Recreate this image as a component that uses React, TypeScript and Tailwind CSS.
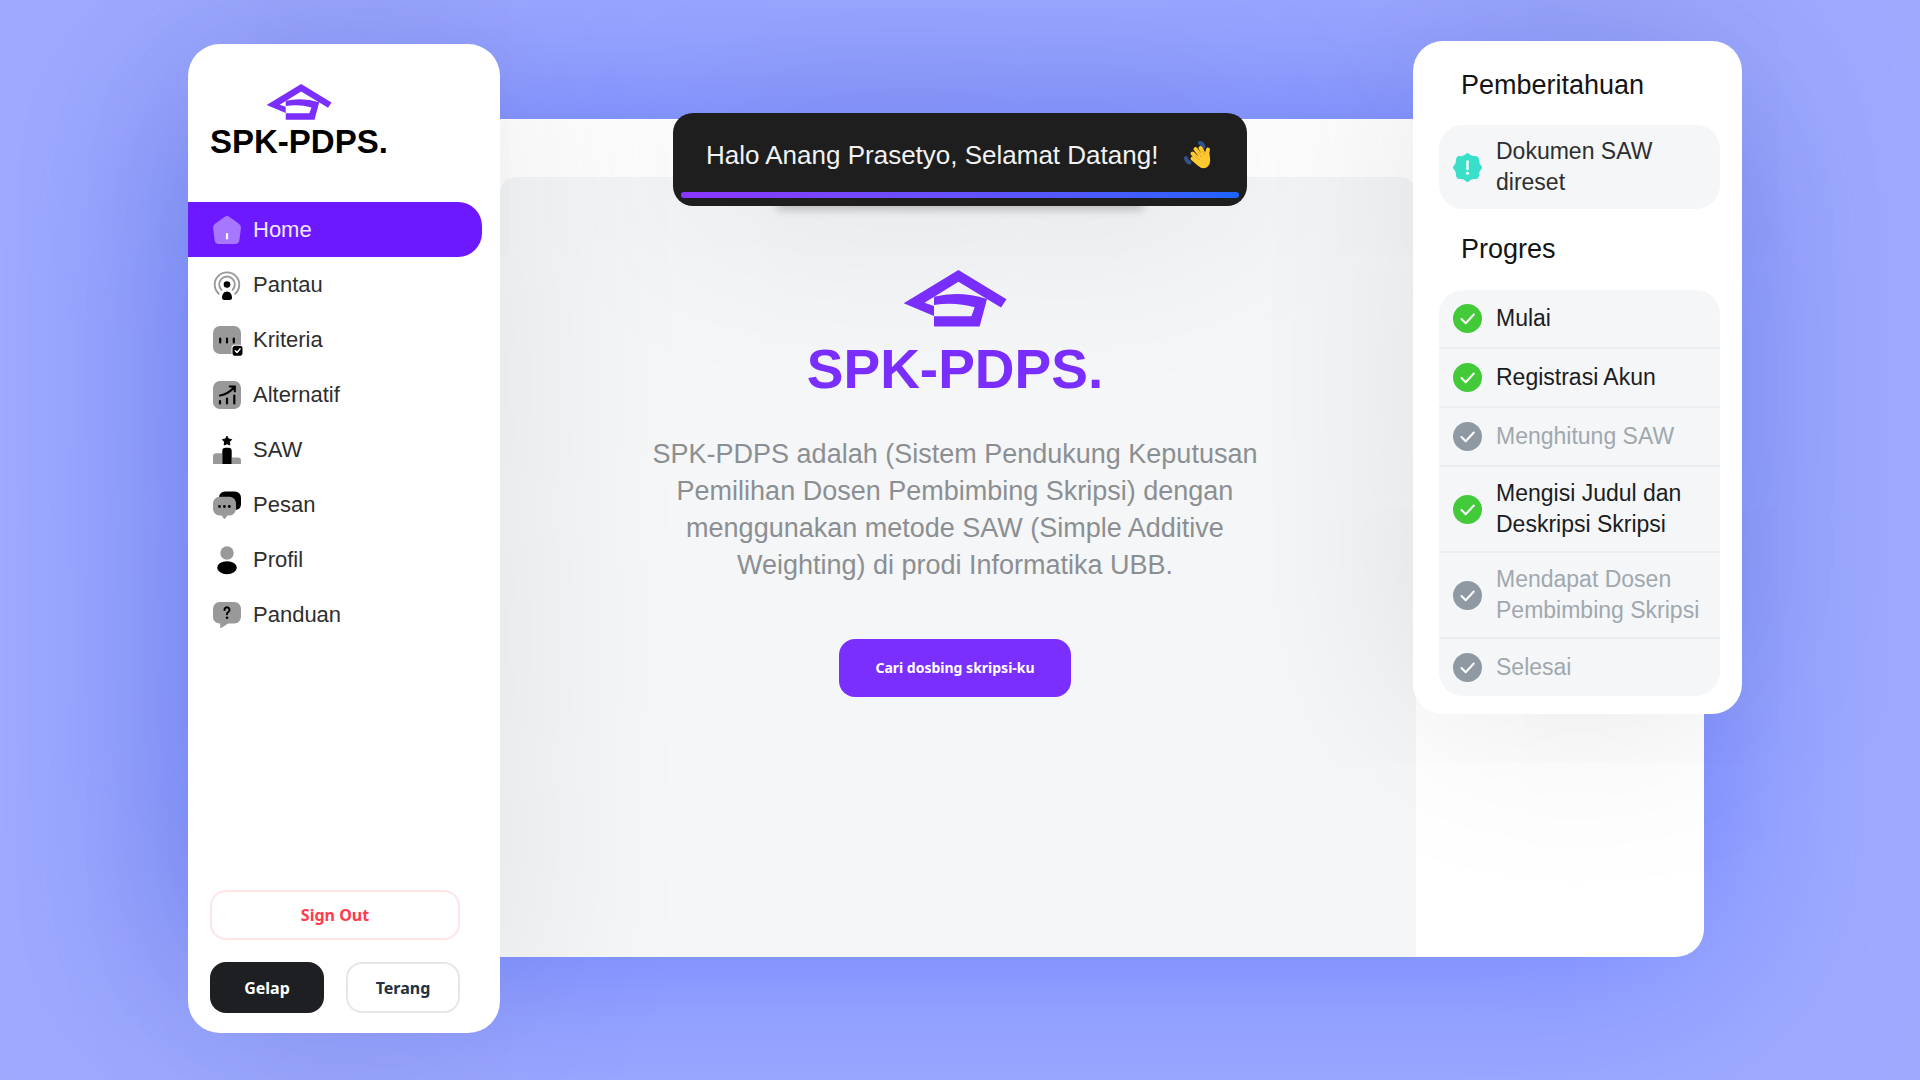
import type { ReactNode } from 'react';

function Logo({ className }: { className: string }) {
  return (
    <svg viewBox="0 0 104 57" className={className} fill="#7b2fff" aria-hidden="true">
      <path d="M55.4 0 103.5 29.2 98 37.5 55.4 11.7 21.5 32.7 31 36V46L.7 33.3Z" />
      <path d="M31 26.7Q57 20.5 84 29L76.6 56.5H31V46.3H68.4L71.7 37.3Q52 31.5 31 35Z" />
    </svg>
  );
}

function Icon({ children }: { children: ReactNode }) {
  return (
    <svg viewBox="0 0 28 28" className="size-7 shrink-0 overflow-visible" aria-hidden="true">
      {children}
    </svg>
  );
}

const HomeIcon = () => (
  <Icon>
    <path
      d="M11.4 1a4.4 4.4 0 0 1 5.2 0l9.6 7.1A4.4 4.4 0 0 1 27.9 12.2L26.4 24A4.4 4.4 0 0 1 22 28H6A4.4 4.4 0 0 1 1.6 24L.1 12.2A4.4 4.4 0 0 1 1.8 8.1Z"
      fill="#a877ff"
    />
    <path d="M14 18V22.500" stroke="#fff" strokeWidth="2.200" strokeLinecap="round" />
  </Icon>
);

const MonitorIcon = () => (
  <Icon>
    <g fill="none" stroke="#999" strokeWidth="1.900" strokeLinecap="round">
      <path d="M5.800 22.800A12.300 12.300 0 1 1 22.200 22.800" />
      <path d="M8.400 18.800A7.800 7.800 0 1 1 19.600 18.800" />
    </g>
    <circle cx="14" cy="13.500" r="3.300" />
    <path d="M14 20.500C17.200 20.500 18.900 23.500 19 26.500Q19 29 16.500 29H11.500Q9 29 9 26.500C9.100 23.500 10.800 20.500 14 20.500Z" />
  </Icon>
);

const CriteriaIcon = () => (
  <Icon>
    <rect width="28" height="28" rx="7" fill="#999" />
    <path d="M7.200 12.500V16.500M14 12.500V16.500M20.800 12.500V16.500" stroke="#000" strokeWidth="2.200" strokeLinecap="round" />
    <rect x="18.500" y="18.700" width="11.500" height="11.500" rx="3.500" fill="#fff" />
    <rect x="19.500" y="19.700" width="10" height="10" rx="2.800" />
    <path d="M22.300 24.800 24 26.400 27 22.900" fill="none" stroke="#fff" strokeWidth="1.500" strokeLinecap="round" strokeLinejoin="round" />
  </Icon>
);

const AlternativeIcon = () => (
  <Icon>
    <rect width="28" height="28" rx="7" fill="#999" />
    <g fill="none" stroke="#000" strokeWidth="2.200" strokeLinecap="round">
      <path d="M7 20V22.500M14 17.500V22.500M21.300 14.500V22.500" />
      <path d="M7 14.500Q15 13 20.800 6.700M16.800 5.500H21.800V10.300" />
    </g>
  </Icon>
);

const RankIcon = () => (
  <Icon>
    <path d="M0 28V20.500A3.200 3.200 0 0 1 3.200 17.300H9V28ZM19 21.500H25A3 3 0 0 1 28 24.500V28H19Z" fill="#999" />
    <path d="M9.300 28V15A3.200 3.200 0 0 1 12.500 11.800H15.500A3.200 3.200 0 0 1 18.700 15V28Z" />
    <path
      d="M14 .2 15.500 3 18.600 3.600 16.400 5.900 16.800 9 14 7.700 11.200 9 11.600 5.900 9.400 3.600 12.500 3Z"
      stroke="#000"
      strokeWidth="1"
      strokeLinejoin="round"
    />
  </Icon>
);

const MessageIcon = () => (
  <Icon>
    <path d="M12 .5H22A6 6 0 0 1 28 6.500V13.500A6 6 0 0 1 22.800 19L21 8 6 6A6 6 0 0 1 12 .5Z" />
    <path
      d="M6.500 5.800H16.500A6.500 6.500 0 0 1 23 12.300V18A6.500 6.500 0 0 1 16.500 24.500H14.300L12.500 27.200Q11.500 28.500 10.500 27.200L8.700 24.500H6.500A6.500 6.500 0 0 1 0 18V12.300A6.500 6.500 0 0 1 6.500 5.800Z"
      fill="#999"
    />
    <circle cx="6.500" cy="15.500" r="1.400" />
    <circle cx="11.400" cy="15.500" r="1.400" />
    <circle cx="16.300" cy="15.500" r="1.400" />
  </Icon>
);

const ProfileIcon = () => (
  <Icon>
    <circle cx="14" cy="7" r="6.700" fill="#999" />
    <ellipse cx="14" cy="21.700" rx="9.800" ry="6.500" />
  </Icon>
);

const GuideIcon = () => (
  <Icon>
    <path
      d="M6.500 1H21.500A6.500 6.500 0 0 1 28 7.500V16A6.500 6.500 0 0 1 21.500 22.500H15L8.700 26.800Q7 27.700 7.200 25.700V22.500A6.500 6.500 0 0 1 0 16V7.500A6.500 6.500 0 0 1 6.500 1Z"
      fill="#999"
    />
    <path d="M11.500 8.900A2.500 2.500 0 1 1 15.300 11Q14 11.800 14 13.200" fill="none" stroke="#000" strokeWidth="2" strokeLinecap="round" />
    <circle cx="14" cy="16.800" r="1.300" />
  </Icon>
);

const navItems = [
  { label: 'Home', icon: HomeIcon, active: true },
  { label: 'Pantau', icon: MonitorIcon },
  { label: 'Kriteria', icon: CriteriaIcon },
  { label: 'Alternatif', icon: AlternativeIcon },
  { label: 'SAW', icon: RankIcon },
  { label: 'Pesan', icon: MessageIcon },
  { label: 'Profil', icon: ProfileIcon },
  { label: 'Panduan', icon: GuideIcon },
];

const steps = [
  { label: 'Mulai', done: true },
  { label: 'Registrasi Akun', done: true },
  { label: 'Menghitung SAW', done: false },
  { label: 'Mengisi Judul dan Deskripsi Skripsi', done: true },
  { label: 'Mendapat Dosen Pembimbing Skripsi', done: false },
  { label: 'Selesai', done: false },
];

function Sidebar() {
  return (
    <aside className="z-10 col-start-1 row-start-1 mt-11 mb-[47px] flex flex-col rounded-[32px] bg-white shadow-[0_0_200px_rgba(0,0,0,0.11)]">
      <a href="#" className="ml-[22px] mt-10 flex flex-col items-center self-start text-black">
        <Logo className="h-9 w-[66px]" />
        <span className="mt-1 text-[33px] leading-9 font-bold">SPK-PDPS.</span>
      </a>
      <nav className="mt-[42px] mr-[18px] flex flex-col">
        {navItems.map(({ label, icon: NavIcon, active }) => (
          <a
            key={label}
            href="#"
            className={
              active
                ? 'flex h-[55px] items-center gap-3 rounded-r-3xl bg-[#6c19ff] pl-[25px] text-[22px] text-[#f0e8ff]'
                : 'flex h-[55px] items-center gap-3 pl-[25px] text-[22px] text-[#2e2e2e]'
            }
          >
            <NavIcon />
            {label}
          </a>
        ))}
      </nav>
      <div className="mt-auto mr-10 mb-5 ml-[22px] grid grid-cols-2 gap-[22px] font-['Noto_Sans',sans-serif] text-base font-bold">
        <button type="button" className="col-span-2 h-[50px] rounded-2xl border-2 border-[#ffe4e6] text-[#ff3b4c]">
          Sign Out
        </button>
        <button type="button" className="h-[51px] rounded-2xl bg-[#1e1f23] text-white">
          Gelap
        </button>
        <button type="button" className="h-[51px] rounded-2xl border-2 border-[#e6e6e8] text-[#22303f]">
          Terang
        </button>
      </div>
    </aside>
  );
}

function Hero() {
  return (
    <div className="col-span-3 col-start-1 row-start-1 mt-[119px] mb-[123px] flex rounded-[28px] bg-white pt-[58px] pl-[312px] shadow-[0_0_190px_#6b80ff]">
      <main className="flex flex-1 flex-col items-center rounded-t-2xl bg-[#f4f6f8] pt-[93px] pr-[6px]">
        <Logo className="h-[57px] w-[104px]" />
        <h1 className="mt-3 text-[55px] leading-[60px] font-bold text-[#7b2fff]">SPK-PDPS.</h1>
        <p className="mt-[37px] max-w-[620px] text-center text-[27px] leading-[37px] text-[#8c8f92]">
          SPK-PDPS adalah (Sistem Pendukung Keputusan Pemilihan Dosen Pembimbing Skripsi) dengan menggunakan metode SAW
          (Simple Additive Weighting) di prodi Informatika UBB.
        </p>
        <button
          type="button"
          className="mt-[55px] h-[58px] w-[232px] rounded-2xl bg-[#7b2fff] font-['Noto_Sans',sans-serif] text-sm font-bold text-white"
        >
          Cari dosbing skripsi-ku
        </button>
      </main>
      <div className="w-72" />
    </div>
  );
}

function StatusPanel() {
  return (
    <aside className="z-10 col-span-2 col-start-3 row-start-1 mt-[41px] self-start rounded-[30px] bg-white pt-[26px] pr-[22px] pb-[18px] pl-[26px] shadow-[0_0_200px_rgba(0,0,0,0.11)]">
      <h2 className="ml-[22px] text-[27px] leading-9 text-[#141414]">Pemberitahuan</h2>
      <div className="mt-[22px] flex items-center gap-[14px] rounded-3xl bg-[#f4f6f8] py-[11px] pl-[14px] text-[23px] leading-[31px] text-[#2e2e2e]">
        <svg viewBox="0 0 29 29" className="size-[29px] shrink-0" aria-hidden="true">
          <path
            d="M14.500 0Q16 .3 17.500 2 20 3.500 22.500 3 25.300 3 25.900 6 26 9.500 27 11.200 29 13 29 14.500 29 16 27 17.800 26 19.500 25.900 23 25.300 26 22.500 26 20 25.500 17.500 27 16 29 14.500 29 13 29 11.500 27 9 25.500 6.500 26 3.700 26 3.100 23 3 19.500 2 17.800 0 16 0 14.500 0 13 2 11.200 3 9.500 3.100 6 3.700 3 6.500 3 9 3.500 11.500 2 13 .3 14.500 0Z"
            fill="#3adfca"
          />
          <path d="M14.500 8.500V16" stroke="#fff" strokeWidth="2.400" strokeLinecap="round" />
          <circle cx="14.500" cy="20.300" r="1.500" fill="#fff" />
        </svg>
        <p>Dokumen SAW direset</p>
      </div>
      <h2 className="mt-[22px] ml-[22px] text-[27px] leading-9 text-[#141414]">Progres</h2>
      <ol className="mt-[23px] divide-y-2 divide-[#ebeef0] rounded-3xl bg-[#f4f6f8]">
        {steps.map(({ label, done }) => (
          <li
            key={label}
            className={
              done
                ? 'flex min-h-[59px] items-center gap-[14px] py-[11px] pl-[14px] text-[23px] leading-[31px] text-[#1c1c1e] last:min-h-[57px]'
                : 'flex min-h-[59px] items-center gap-[14px] py-[11px] pl-[14px] text-[23px] leading-[31px] text-[#a0a8ae] last:min-h-[57px]'
            }
          >
            <svg viewBox="0 0 29 29" className="size-[29px] shrink-0" aria-hidden="true">
              <circle cx="14.500" cy="14.500" r="14.500" fill={done ? '#43ca39' : '#8e99a4'} />
              <path d="M8.500 15 12.700 19.200 20.800 10.500" fill="none" stroke="#fff" strokeWidth="2" strokeLinecap="round" strokeLinejoin="round" />
            </svg>
            {label}
          </li>
        ))}
      </ol>
    </aside>
  );
}

function WavingHand() {
  return (
    <svg viewBox="0 0 28 30" className="h-[30px] w-7 shrink-0" aria-hidden="true">
      <g fill="none" stroke="#33528c" strokeWidth="4" strokeLinecap="round">
        <path d="M17 3Q20 4 20.500 7" />
        <path d="M3 18Q3.500 21.500 6.500 22.500" />
      </g>
      <g fill="none" stroke="#fdc92f" strokeWidth="4" strokeLinecap="round">
        <path d="M9.500 18.500 16 24" />
        <path d="M9.500 13.500 17 21" />
        <path d="M12.500 9 20 19" />
        <path d="M17.500 8 22.500 17" />
        <path d="M25 9.500Q23.500 13 25 18" />
      </g>
      <path d="M13 17 19 12 24.500 13 27 18Q28 24.500 23.500 27.500 19 29.500 15.500 26L10.500 20.500Z" fill="#fdc92f" />
      <path d="M12 15.500 16.500 20M15 12 19 17.500M19 11 22 15.500" stroke="#e0952a" strokeWidth=".7" />
    </svg>
  );
}

function Toast() {
  return (
    <div role="status" className="absolute top-[113px] left-1/2 z-20 w-[574px] -translate-x-1/2">
      <div className="absolute inset-x-[104px] -bottom-1 h-10 bg-black/20 blur-[4px]" />
      <div className="relative rounded-[20px] bg-[#1e1e1e] px-2 pb-2 shadow-[0_0_200px_rgba(0,0,0,0.12)]">
        <div className="flex h-[79px] items-center justify-between pt-[5px] pr-7 pl-[25px]">
          <p className="text-[26px] whitespace-nowrap text-[#f2f2f2]">Halo Anang Prasetyo, Selamat Datang!</p>
          <WavingHand />
        </div>
        <div className="h-[6px] rounded-full bg-linear-to-r from-[#8b35ff] to-[#1b63ff]" />
      </div>
    </div>
  );
}

export default function App() {
  return (
    <div className="relative grid min-h-screen grid-cols-[312px_1fr_291px_38px] overflow-hidden bg-[#9faaff] pr-[178px] pl-[188px] font-['Liberation_Sans',sans-serif]">
      <Hero />
      <Sidebar />
      <StatusPanel />
      <Toast />
    </div>
  );
}
